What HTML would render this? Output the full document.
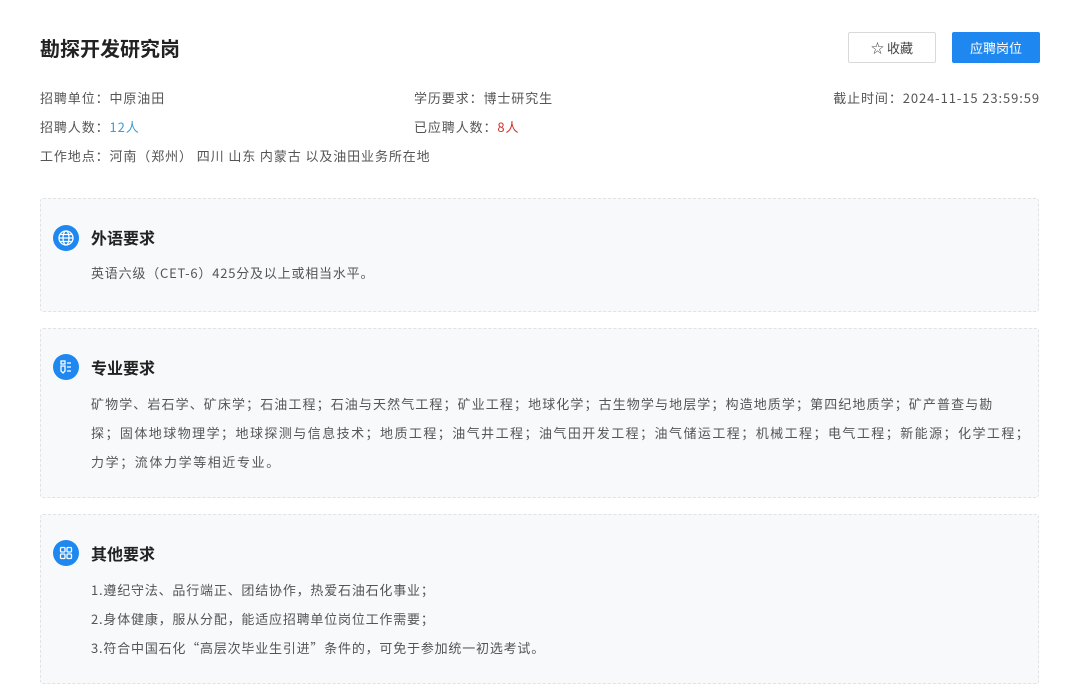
<!DOCTYPE html>
<html><head><meta charset="utf-8"><style>
*{margin:0;padding:0;box-sizing:border-box}
body{width:1077px;height:685px;background:#fff;font-family:"Noto Sans CJK SC","Liberation Sans",sans-serif;color:#555;position:relative;overflow:hidden;font-size:13px}
.a{position:absolute;white-space:nowrap;letter-spacing:0.9px}
h1{position:absolute;left:40px;top:35px;font-size:20px;font-weight:bold;color:#222;line-height:26px}
.btn{position:absolute;top:32px;height:31px;border-radius:2px;font-size:13px;line-height:29px;text-align:center}
.box{position:absolute;left:40px;width:999px;border:1px dashed #dfe3e8;background:#f8f9fb;border-radius:3px}
.ic{position:absolute;left:12px;width:26px;height:26px;border-radius:50%;background:#1e88f0}
.t{position:absolute;left:50px;font-size:16px;font-weight:bold;color:#222;line-height:24px}
.p{position:absolute;left:50px;font-size:13px;line-height:29px;color:#555;white-space:nowrap;letter-spacing:0.8px}
</style></head><body>
<h1>勘探开发研究岗</h1>
<div class="btn" style="left:848px;width:88px;border:1px solid #d9d9d9;color:#444">☆ 收藏</div>
<div class="btn" style="left:952px;width:88px;background:#1e88f0;color:#fff;line-height:31px">应聘岗位</div>
<div class="a" style="left:40px;top:89px;line-height:18px">招聘单位：中原油田</div>
<div class="a" style="left:414px;top:89px;line-height:18px">学历要求：博士研究生</div>
<div class="a" style="right:37px;top:89px;line-height:18px">截止时间：2024-11-15 23:59:59</div>
<div class="a" style="left:40px;top:118px;line-height:18px">招聘人数：<span style="color:#3a9fd6">12人</span></div>
<div class="a" style="left:414px;top:118px;line-height:18px">已应聘人数：<span style="color:#d0322b">8人</span></div>
<div class="a" style="left:40px;top:147px;line-height:18px">工作地点：河南（郑州） 四川 山东 内蒙古 以及油田业务所在地</div>

<div class="box" style="top:198px;height:114px">
<div class="ic" style="top:26px"><svg width="26" height="26" viewBox="0 0 26 26" fill="none" stroke="#fff" stroke-width="1.3"><circle cx="13" cy="13" r="7"/><ellipse cx="13" cy="13" rx="3" ry="7"/><path d="M6 13h14M7 9.5h12M7 16.5h12"/></svg></div>
<div class="t" style="top:26px">外语要求</div>
<div class="p" style="top:59px">英语六级（CET-6）425分及以上或相当水平。</div>
</div>

<div class="box" style="top:328px;height:170px">
<div class="ic" style="top:25px"><svg width="26" height="26" viewBox="0 0 26 26" fill="none" stroke="#fff" stroke-width="1.3"><rect x="8" y="7" width="4" height="3"/><path d="M8 12h4v5l-2 2-2-2z"/><path d="M14 9h4M14 13h4M14 17h4"/></svg></div>
<div class="t" style="top:26px">专业要求</div>
<div class="p" style="top:60px"><span style="letter-spacing:1.1px">矿物学、岩石学、矿床学；石油工程；石油与天然气工程；矿业工程；地球化学；古生物学与地层学；构造地质学；第四纪地质学；矿产普查与勘</span><br><span style="letter-spacing:1.45px">探；固体地球物理学；地球探测与信息技术；地质工程；油气井工程；油气田开发工程；油气储运工程；机械工程；电气工程；新能源；化学工程；</span><br><span style="letter-spacing:1.6px">力学；流体力学等相近专业。</span></div>
</div>

<div class="box" style="top:514px;height:170px">
<div class="ic" style="top:25px"><svg width="26" height="26" viewBox="0 0 26 26" fill="none" stroke="#fff" stroke-width="1.3"><rect x="7.5" y="7.5" width="4.5" height="4.5" rx="1"/><rect x="14" y="7.5" width="4.5" height="4.5" rx="1"/><rect x="7.5" y="14" width="4.5" height="4.5" rx="1"/><rect x="14" y="14" width="4.5" height="4.5" rx="1"/></svg></div>
<div class="t" style="top:26px">其他要求</div>
<div class="p" style="top:60px">1.遵纪守法、品行端正、团结协作，热爱石油石化事业；<br>2.身体健康，服从分配，能适应招聘单位岗位工作需要；<br>3.符合中国石化“高层次毕业生引进”条件的，可免于参加统一初选考试。</div>
</div>
</body></html>
